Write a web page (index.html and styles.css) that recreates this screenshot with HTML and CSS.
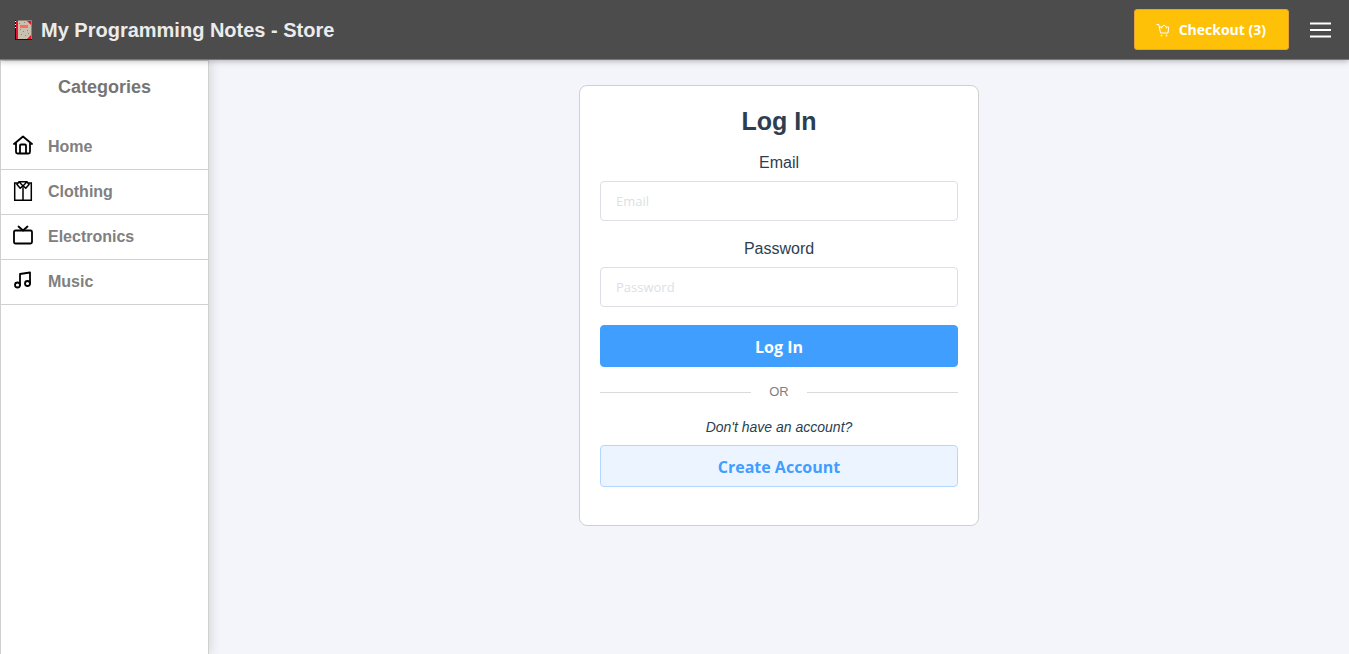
FILE: index.html
```html
<!DOCTYPE html>
<html lang="en">
<head>
<meta charset="utf-8">
<meta name="viewport" content="width=device-width, initial-scale=1">
<title>My Programming Notes - Store</title>
<link rel="stylesheet" href="styles.css">
</head>
<body>
<header class="topbar">
  <a class="brand" href="#">
    <svg class="brand-icon" viewBox="0 0 18 20" aria-hidden="true">
      <path fill="#111" d="M0 0h1v20H0zM0 19h17v1H0z"/>
      <path fill="#fff" d="M0 1h1v1H0zM0 4h1v1H0zM0 7h1v1H0z"/>
      <path fill="#e8112d" d="M1 1h15v18H1z"/>
      <path fill="#c9c0b0" d="M3 1h9l4 4v10l-4 4H3z"/>
      <path fill="#8b8477" d="M3 0h14v1H3zM16 1h1v18h-1zM5 9h1v1H5zM8 11h1v1H8zM12 10h1v1h-1zM6 14h1v1H6zM10 15h1v1h-1zM13 13h1v1h-1zM4 3h1v1H4zM9 2h1v1H9z"/>
      <path fill="#ff6b63" d="M5 5h8v3H5z"/>
    </svg>
    <span>My Programming Notes - Store</span>
  </a>
  <div class="actions">
    <button class="checkout" type="button">
      <svg class="cart-icon" viewBox="0 0 14 14" aria-hidden="true">
        <path d="M.5 1.500h2.300l1.700 8.500h7.500l.7-6H10M3.500 4h2.700M5.700 5.500V4L8 2l2.300 2v1.500"/>
        <circle cx="5.500" cy="12.500" r=".5"/><circle cx="10.500" cy="12.500" r=".5"/>
      </svg>
      <span>Checkout (3)</span>
    </button>
    <button class="menu" type="button" aria-label="Menu">
      <svg viewBox="0 0 21 16" aria-hidden="true"><path d="M0 1.500h21M0 8h21M0 14.500h21"/></svg>
    </button>
  </div>
</header>
<div class="layout">
  <nav class="sidebar" aria-labelledby="categories-title">
    <h2 class="sidebar-title" id="categories-title">Categories</h2>
    <ul class="categories">
      <li><a class="category" href="#">
        <svg viewBox="0 0 20 20" aria-hidden="true"><path d="M1 9 10 1.500 19 9M3 7.500V17a1.500 1.500 0 0 0 1.500 1.500h11A1.500 1.500 0 0 0 17 17V7.500M7 18v-7.500a1 1 0 0 1 1-1h4a1 1 0 0 1 1 1V18"/></svg>
        <span>Home</span></a></li>
      <li><a class="category" href="#">
        <svg class="shirt" viewBox="0 0 20 20" aria-hidden="true"><path d="M5 2H1.700v17.300h16.600V2H15M10 7v12.500M6 .8h8L16 3.500 12.800 7.200 10 5 7.200 7.200 4 3.500zM6 .8 10 5l4-4.200"/></svg>
        <span>Clothing</span></a></li>
      <li><a class="category" href="#">
        <svg viewBox="0 0 20 20" aria-hidden="true"><rect x="1" y="5.500" width="18" height="13" rx="1.500"/><path d="m5.500 1.500 4.500 4 4.500-4"/></svg>
        <span>Electronics</span></a></li>
      <li><a class="category" href="#">
        <svg viewBox="0 0 20 20" aria-hidden="true"><circle cx="4.500" cy="15" r="2.500"/><circle cx="14.500" cy="13.500" r="2.500"/><path d="M7 15V4l10-1.500v11"/></svg>
        <span>Music</span></a></li>
    </ul>
  </nav>
  <main class="content">
    <form class="card">
      <h1 class="card-title">Log In</h1>
      <label class="label" for="email">Email</label>
      <input class="field" id="email" type="email" placeholder="Email">
      <label class="label" for="password">Password</label>
      <input class="field" id="password" type="password" placeholder="Password">
      <button class="button primary" type="submit">Log In</button>
      <div class="divider">OR</div>
      <p class="hint">Don't have an account?</p>
      <button class="button secondary" type="button">Create Account</button>
    </form>
  </main>
</div>
</body>
</html>
```
FILE: styles.css
```css
* {
  box-sizing: border-box;
}

body {
  margin: 0;
  min-height: 100vh;
  display: flex;
  flex-direction: column;
  background: #f4f5fa;
  color: #2c3e50;
  font: 16px/20px "Liberation Sans", Arial, sans-serif;
}

svg {
  fill: none;
  stroke: currentColor;
}

.topbar {
  position: relative;
  z-index: 1;
  display: flex;
  align-items: center;
  justify-content: space-between;
  padding: 9px 18px 9px 15px;
  background: #4c4c4c;
  border-bottom: 1px solid #777;
  box-shadow: 0 1px 6px rgba(0, 0, 0, 0.3);
}

.brand {
  display: flex;
  align-items: center;
  gap: 8px;
  color: #ebebeb;
  font-size: 20px;
  font-weight: bold;
  text-decoration: none;
}

.brand-icon {
  width: 18px;
  height: 20px;
  stroke: none;
}

.actions {
  display: flex;
  align-items: center;
  gap: 21px;
}

.checkout {
  display: flex;
  align-items: center;
  gap: 9px;
  padding: 9px 22px 9px 21px;
  border: 1px solid #e6a23c;
  border-radius: 3px;
  background: #ffc107;
  color: #fff;
  font: bold 14px/21px "Open Sans", "Noto Sans", sans-serif;
}

.cart-icon {
  width: 14px;
  height: 14px;
}

.menu {
  display: flex;
  padding: 0;
  border: 0;
  background: none;
  color: #fff;
}

.menu svg {
  width: 21px;
  height: 16px;
  stroke-width: 2;
}

.layout {
  flex: 1;
  display: flex;
}

.sidebar {
  width: 209px;
  flex: none;
  border: 1px solid #d0d0d0;
  border-bottom: 0;
  background: #fff;
  box-shadow: 2px 0 10px rgba(0, 0, 0, 0.12);
}

.sidebar-title {
  margin: 16px 0 28px;
  color: #757575;
  font-size: 18px;
  text-align: center;
}

.categories {
  margin: 0;
  padding: 0;
  list-style: none;
}

.category {
  display: flex;
  align-items: center;
  gap: 15px;
  height: 45px;
  padding: 0 12px;
  border-bottom: 1px solid #d0d0d0;
  color: #808080;
  font-weight: bold;
  text-decoration: none;
}

.category svg {
  width: 20px;
  height: 20px;
  margin-bottom: 4px;
  color: #000;
  stroke-width: 1.8;
  stroke-linejoin: round;
  stroke-linecap: round;
}

.category .shirt {
  margin-bottom: 2px;
  stroke-width: 1.5;
  stroke-linejoin: miter;
}

.content {
  flex: 1;
  padding: 25px 20px;
}

.card {
  display: flex;
  flex-direction: column;
  max-width: 400px;
  margin: 0 auto;
  padding: 20px 20px 38px;
  border: 1px solid #d0d0d0;
  border-radius: 8px;
  background: #fff;
  text-align: center;
}

.card-title {
  margin: 0 0 17px;
  font-size: 25px;
  line-height: 30px;
}

.label {
  margin-bottom: 8px;
}

.field {
  width: 100%;
  height: 40px;
  margin-bottom: 18px;
  padding: 0 15px;
  border: 1px solid #dcdfe6;
  border-radius: 4px;
  background: #fff;
  color: #606266;
  font: 13px/20px "Open Sans", "Noto Sans", sans-serif;
}

.field::placeholder {
  color: #dcdfe6;
  opacity: 1;
}

.button {
  height: 42px;
  padding: 1px 20px 0;
  border: 1px solid;
  border-radius: 4px;
  font: bold 16px/20px "Open Sans", "Noto Sans", sans-serif;
}

.primary {
  border-color: #409eff;
  background: #409eff;
  color: #fff;
}

.secondary {
  border-color: #b3d8ff;
  background: #ecf5ff;
  color: #409eff;
}

.divider {
  display: flex;
  align-items: center;
  gap: 18px;
  margin: 15px 0;
  color: #808080;
  font-size: 13px;
}

.divider::before,
.divider::after {
  content: "";
  flex: 1;
  border-top: 1px solid #dadada;
}

.hint {
  margin: 0 0 8px;
  font-size: 14px;
  font-style: italic;
}
```
